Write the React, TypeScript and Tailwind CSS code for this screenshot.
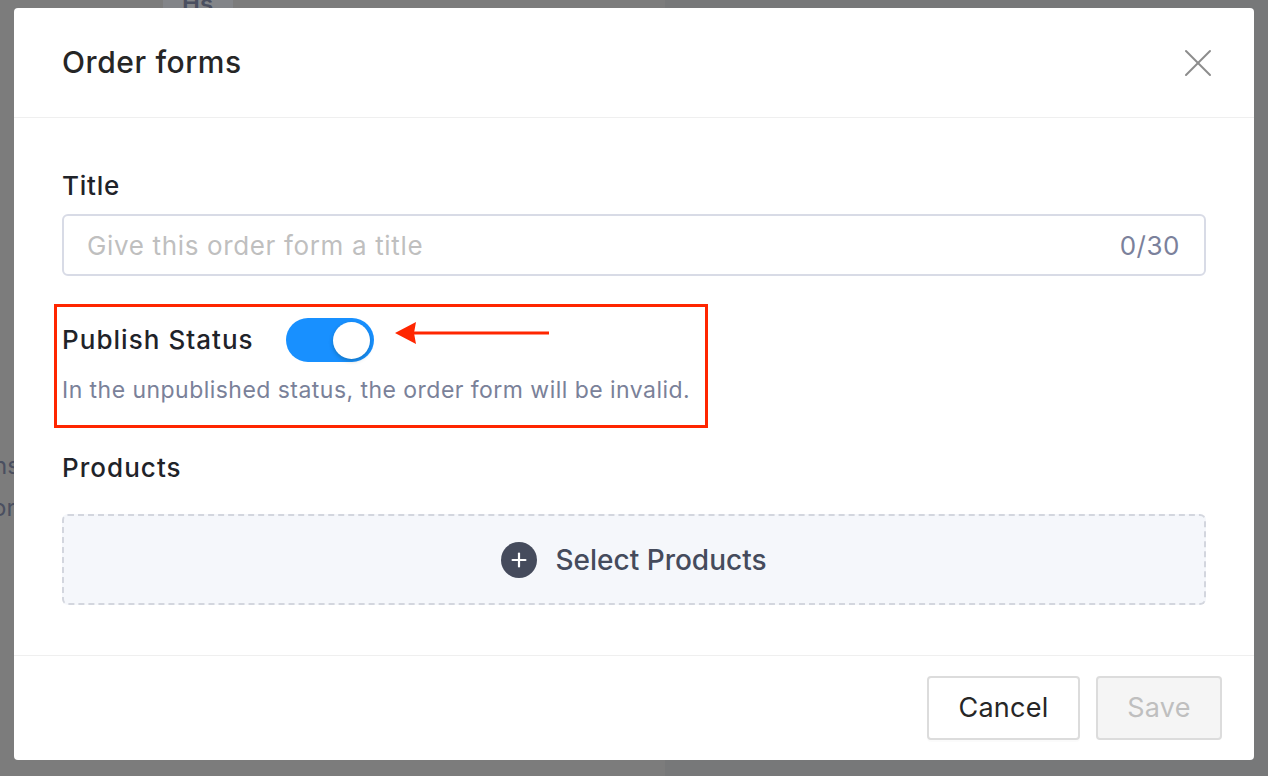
import { X, Plus } from 'lucide-react'

export default function App() {
  return (
    <div className="relative h-[776px] w-[1268px] overflow-hidden bg-[#7b7b7b] font-['Inter','Noto_Sans',sans-serif]">
      {/* page behind the overlay */}
      <div className="flex h-full">
        <div className="relative w-[665px] bg-[#7c7c7c]">
          <div className="absolute left-[163px] top-0 h-[8px] w-[70px] bg-[#838589]" />
          <div className="absolute left-[182px] top-[-14px] text-[24px] font-semibold text-[#4a4f60]">Hs</div>
          <div className="absolute left-[-7px] top-[448px] text-[24px] text-[#4a4f60]">ns</div>
          <div className="absolute left-[-8px] top-[490px] text-[24px] text-[#4a4f60]">or</div>
        </div>
        <div className="flex-1 bg-[#777879]" />
      </div>

      {/* modal */}
      <div className="absolute left-[14px] top-[8px] flex h-[752px] w-[1240px] flex-col rounded-[4px] bg-white">
        <div className="flex h-[110px] items-center justify-between border-b border-[#efefef] px-12">
          <h2 className="text-[30px] font-medium tracking-[0.02em] text-[#262626]">Order forms</h2>
          <X size={48} strokeWidth={1} className="mr-[-16px] text-[#8c8c8c]" />
        </div>

        <div className="flex-1 px-12 pt-[52px]">
          <label className="block text-[26px] font-medium leading-[32px] tracking-[0.03em] text-[#1f2329]">Title</label>
          <div className="mt-3 flex h-[62px] items-center justify-between rounded-[6px] border-2 border-[#d8dbe6] pl-[23px] pr-6">
            <span className="text-[26px] tracking-[0.025em] text-[#bfbfbf]">Give this order form a title</span>
            <span className="text-[26px] tracking-[0.02em] text-[#7b819b]">0/30</span>
          </div>

          <div className="relative -ml-2 mt-7 w-[654px] border-[3px] border-[#ff2600] pb-[20px] pl-[5px] pt-[11px]">
            <div className="flex items-center gap-8">
              <span className="text-[26px] font-medium leading-[32px] tracking-[0.04em] text-[#1f2329]">Publish Status</span>
              <div className="flex h-[44px] w-[88px] items-center justify-end rounded-full bg-[#1890ff] pr-[4px]">
                <div className="h-[37px] w-[37px] rounded-full bg-white shadow-[0_2px_4px_rgba(0,35,11,0.25)]" />
              </div>
            </div>
            <p className="mt-[13px] text-[23px] leading-[30px] tracking-[0.02em] text-[#7a8199]">
              In the unpublished status, the order form will be invalid.
            </p>
            <svg className="absolute left-[338px] top-[14px]" width="156" height="24" viewBox="0 0 156 24">
              <polygon points="0,12 21,1 19,12 21,23" fill="#ff2600" />
              <rect x="18" y="10.5" width="136" height="3" fill="#ff2600" />
            </svg>
          </div>

          <label className="mt-6 block text-[26px] font-medium leading-[32px] tracking-[0.04em] text-[#1f2329]">Products</label>
          <div className="mt-[30px] flex h-[91px] items-center justify-center gap-[18px] rounded-[6px] border-2 border-dashed border-[#d3d6de] bg-[#f5f7fb]">
            <div className="flex h-[36px] w-[36px] items-center justify-center rounded-full bg-[#454b5c]">
              <Plus size={22} strokeWidth={2.4} className="text-white" />
            </div>
            <span className="text-[28px] font-medium tracking-[0em] text-[#454b5c]">Select Products</span>
          </div>
        </div>

        <div className="flex h-[105px] items-center justify-end gap-4 border-t border-[#efefef] pr-8">
          <button className="h-[64px] w-[153px] rounded-[4px] border-2 border-[#dcdcdc] bg-white text-[27px] tracking-[0.01em] text-[#262626] shadow-[0_2px_0_rgba(0,0,0,0.015)]">
            Cancel
          </button>
          <button className="h-[64px] w-[126px] rounded-[4px] border-2 border-[#dcdcdc] bg-[#f5f5f5] text-[27px] tracking-[0.01em] text-[#bfbfbf]">
            Save
          </button>
        </div>
      </div>
    </div>
  )
}
